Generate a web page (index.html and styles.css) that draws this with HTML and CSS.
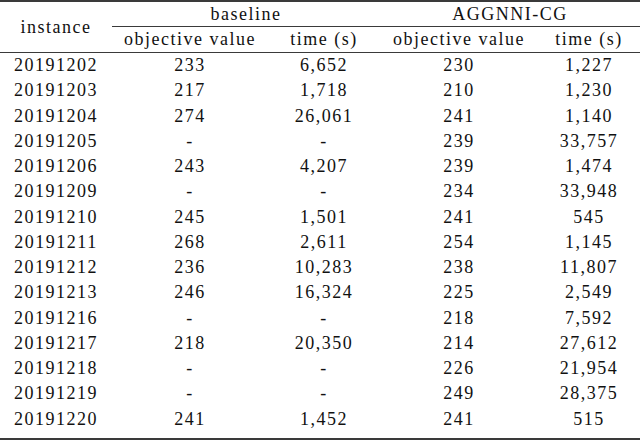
FILE: index.html
```html
<!DOCTYPE html>
<html lang="en">
<head>
    <meta charset="UTF-8">
    <meta name="viewport" content="width=device-width, initial-scale=1.0">
    <title>Results</title>
    <link rel="stylesheet" href="styles.css">
</head>
<body>
    <table class="results">
        <colgroup>
            <col class="c-inst">
            <col class="c-obj">
            <col class="c-time">
            <col class="c-obj2">
            <col class="c-time2">
        </colgroup>
        <thead>
            <tr class="group">
                <th rowspan="2" class="inst">instance</th>
                <th colspan="2" class="cmid">baseline</th>
                <th colspan="2" class="cmid">AGGNNI-CG</th>
            </tr>
            <tr class="sub">
                <th>objective value</th>
                <th>time (s)</th>
                <th>objective value</th>
                <th>time (s)</th>
            </tr>
        </thead>
        <tbody>
            <tr><td>20191202</td><td>233</td><td>6,652</td><td>230</td><td>1,227</td></tr>
            <tr><td>20191203</td><td>217</td><td>1,718</td><td>210</td><td>1,230</td></tr>
            <tr><td>20191204</td><td>274</td><td>26,061</td><td>241</td><td>1,140</td></tr>
            <tr><td>20191205</td><td>-</td><td>-</td><td>239</td><td>33,757</td></tr>
            <tr><td>20191206</td><td>243</td><td>4,207</td><td>239</td><td>1,474</td></tr>
            <tr><td>20191209</td><td>-</td><td>-</td><td>234</td><td>33,948</td></tr>
            <tr><td>20191210</td><td>245</td><td>1,501</td><td>241</td><td>545</td></tr>
            <tr><td>20191211</td><td>268</td><td>2,611</td><td>254</td><td>1,145</td></tr>
            <tr><td>20191212</td><td>236</td><td>10,283</td><td>238</td><td>11,807</td></tr>
            <tr><td>20191213</td><td>246</td><td>16,324</td><td>225</td><td>2,549</td></tr>
            <tr><td>20191216</td><td>-</td><td>-</td><td>218</td><td>7,592</td></tr>
            <tr><td>20191217</td><td>218</td><td>20,350</td><td>214</td><td>27,612</td></tr>
            <tr><td>20191218</td><td>-</td><td>-</td><td>226</td><td>21,954</td></tr>
            <tr><td>20191219</td><td>-</td><td>-</td><td>249</td><td>28,375</td></tr>
            <tr class="last"><td>20191220</td><td>241</td><td>1,452</td><td>241</td><td>515</td></tr>
        </tbody>
    </table>
</body>
</html>
```

FILE: styles.css
```css
body {
    margin: 0;
    background: #fff;
}

.results {
    width: 640px;
    table-layout: fixed;
    border-collapse: collapse;
    border-top: 2px solid #3a3a3a;
    border-bottom: 2px solid #3a3a3a;
    font-family: "Liberation Serif", "Times New Roman", serif;
    font-size: 18px;
    letter-spacing: 1.5px;
    color: #111;
}

.c-inst { width: 112px; }
.c-obj { width: 156px; }
.c-time { width: 112px; }
.c-obj2 { width: 158px; }
.c-time2 { width: 102px; }

th, td {
    padding: 0;
    text-align: center;
    font-weight: normal;
    white-space: nowrap;
}

.group th {
    height: 24px;
}

.group .cmid {
    border-bottom: 1px solid #3a3a3a;
}

.inst {
    border-bottom: 1px solid #3a3a3a;
}

.sub th {
    height: 25px;
    border-bottom: 1px solid #3a3a3a;
}

tbody td {
    height: 25.25px;
}

tbody tr.last td {
    height: 31.5px;
    vertical-align: top;
    line-height: 25.25px;
}
```
